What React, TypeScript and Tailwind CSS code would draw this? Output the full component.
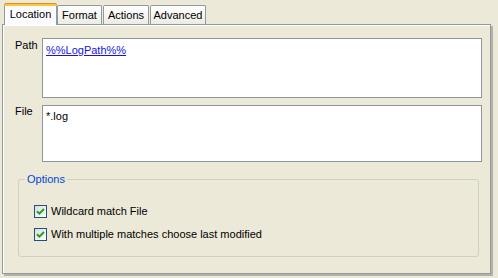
import React from "react";

const font = { fontFamily: '"Liberation Sans", Arial, sans-serif' };

function Check() {
  return (
    <span className="flex h-[13px] w-[13px] shrink-0 items-center justify-center border border-[#1C5180] bg-gradient-to-br from-[#DCDCD7] to-white">
      <svg width="9" height="9" viewBox="0 0 9 9">
        <path d="M1 4.2 L3.4 6.6 L8 2" stroke="#21A121" strokeWidth="2" fill="none" />
      </svg>
    </span>
  );
}

function Tab({ label, active }: { label: string; active?: boolean }) {
  if (active) {
    return (
      <div className="relative z-10 mb-[-1px] flex h-[22px] w-[53px] items-center justify-center rounded-t-[3px] border-x border-t border-[#919B9C] bg-[#FCFCFE] pb-[1px] text-black">
        <span className="absolute left-[-1px] right-[-1px] top-[-1px] h-[3px] rounded-t-[3px] border-t border-[#E68B2C] bg-[#FFC83C]" />
        {label}
      </div>
    );
  }
  return (
    <div className="flex h-[19px] items-center justify-center rounded-t-[2px] border-x border-t border-[#919B9C] bg-gradient-to-b from-white to-[#ECEBE6] text-black">
      {label}
    </div>
  );
}

export default function App() {
  return (
    <div className="h-[278px] w-[498px] overflow-hidden bg-[#ECE9D8] text-[11px] leading-[13px] text-black" style={font}>
      <div className="flex h-[24px] items-end pl-[4px]">
        <Tab label="Location" active />
        <div className="w-[45px]"><Tab label="Format" /></div>
        <div className="ml-[1px] w-[46px]"><Tab label="Actions" /></div>
        <div className="ml-[1px] w-[56px]"><Tab label="Advanced" /></div>
      </div>
      <div className="ml-[2px] h-[250px] w-[489px] border border-[#919B9C] bg-[#ECE9D8] pl-[12px] pt-[13px] shadow-[inset_1px_1px_0_#ffffff,2px_2px_0_#B4B2A8]">
        <div className="flex">
          <div className="w-[27px] pt-[1px]">Path</div>
          <div className="h-[60px] w-[440px] border border-[#8E959C] bg-white pl-[3px] pt-[5px]">
            <span className="text-[#1515D8] underline">%%LogPath%%</span>
          </div>
        </div>
        <div className="mt-[7px] flex">
          <div className="w-[27px]">File</div>
          <div className="h-[57px] w-[440px] border border-[#8E959C] bg-white pl-[3px] pt-[4px]">*.log</div>
        </div>
        <div className="relative ml-[3px] mt-[17px] h-[78px] w-[461px] rounded-[3px] border border-[#D0D0BF] pl-[15px] pt-[25px]">
          <span className="absolute left-[6px] top-[-7px] bg-[#ECE9D8] px-[2px] text-[#0046D5]">Options</span>
          <div className="flex h-[13px] items-center gap-[4px]">
            <Check />
            <span>Wildcard match File</span>
          </div>
          <div className="mt-[10px] flex h-[13px] items-center gap-[4px]">
            <Check />
            <span>With multiple matches choose last modified</span>
          </div>
        </div>
      </div>
    </div>
  );
}
